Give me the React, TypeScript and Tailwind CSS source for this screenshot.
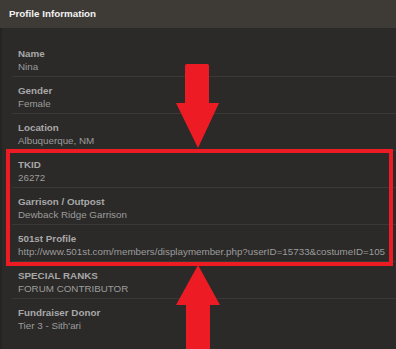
const ROWS = [
    { label: 'Name', value: 'Nina' },
    { label: 'Gender', value: 'Female' },
    { label: 'Location', value: 'Albuquerque, NM' },
    { label: 'TKID', value: '26272' },
    { label: 'Garrison / Outpost', value: 'Dewback Ridge Garrison' },
    { label: '501st Profile', value: 'http://www.501st.com/members/displaymember.php?userID=15733&costumeID=105' },
    { label: 'SPECIAL RANKS', value: 'FORUM CONTRIBUTOR' },
    { label: 'Fundraiser Donor', value: "Tier 3 - Sith'ari" },
];

export default function App() {
    return (
        <div className="relative h-[349px] w-[396px] overflow-hidden bg-[#2b2a28] font-['Liberation_Sans',Arial,sans-serif]">
            <div className="flex h-[28px] items-center bg-[#3e3a36] pl-[9px] text-[9.8px] font-bold text-[#f2f2f2]">
                Profile Information
            </div>
            <div className="h-[321px] border-l-2 border-[#252422] pt-[12px] pl-[10px]">
                {ROWS.map((row, i) => (
                    <div key={row.label}
                        className={`px-[6px] pt-[7px] pb-[3px] ${i < ROWS.length - 1 ? 'border-b border-[#3a3936]' : ''}`}>
                        <div className="text-[9.8px] leading-[13px] font-bold text-[#a8a8a8]">{row.label}</div>
                        <div className="text-[9.8px] leading-[13px] whitespace-nowrap text-[#9c9c9c]">{row.value}</div>
                    </div>
                ))}
            </div>

            {/* highlight box */}
            <div className="absolute left-[6px] top-[149px] h-[117px] w-[387px] border-4 border-[#ed1c24]" />

            {/* arrows */}
            <svg className="absolute left-0 top-0" width="396" height="349" viewBox="0 0 396 349">
                <path d="M187 64 H207 Q209 64 209 66 V103 H219 L198 148 L176 103 H185 V66 Q185 64 187 64 Z" fill="#ed1c24" />
                <path d="M198 265 L220 305 H210 V349 H186 V305 H176 Z" fill="#ed1c24" />
            </svg>
        </div>
    );
}
